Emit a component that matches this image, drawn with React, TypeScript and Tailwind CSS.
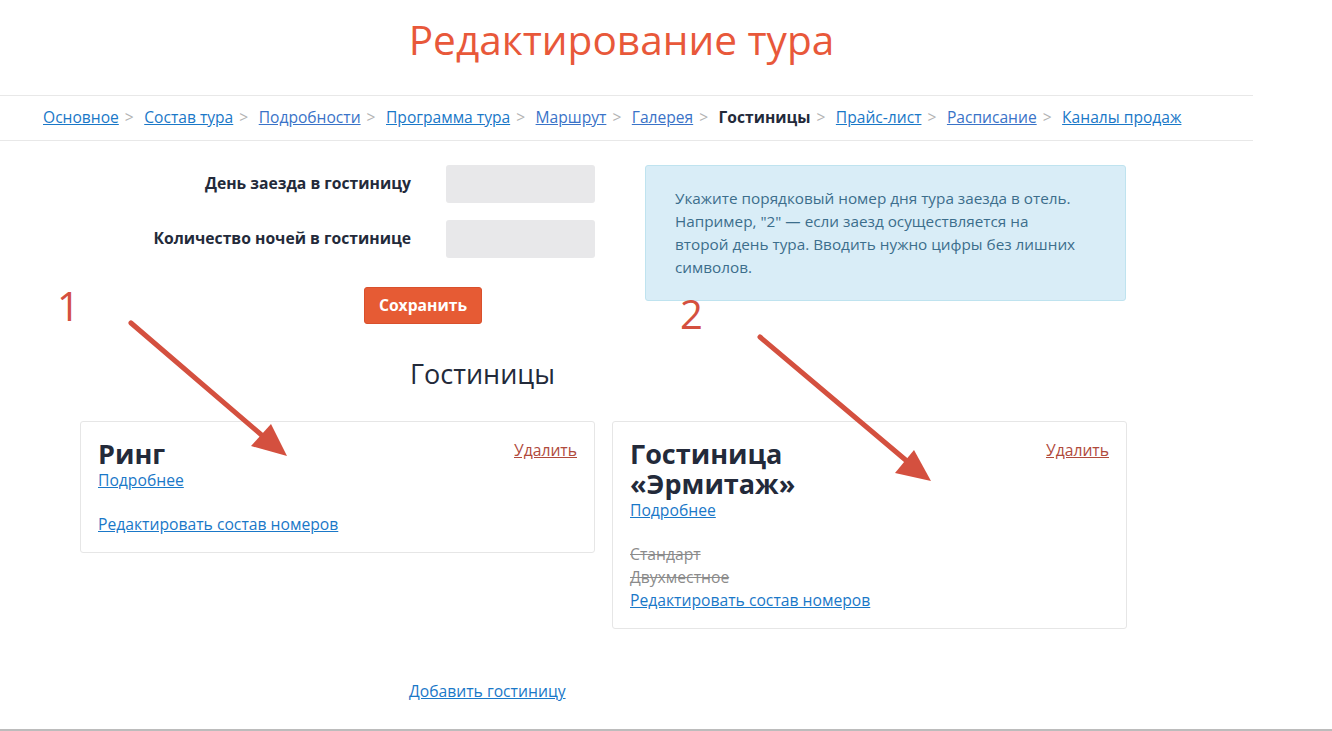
import React from "react";

const crumbs = [
  { label: "Основное", href: "#" },
  { label: "Состав тура", href: "#" },
  { label: "Подробности", href: "#", visited: true },
  { label: "Программа тура", href: "#" },
  { label: "Маршрут", href: "#", visited: true },
  { label: "Галерея", href: "#", visited: true },
  { label: "Гостиницы", current: true },
  { label: "Прайс-лист", href: "#" },
  { label: "Расписание", href: "#", visited: true },
  { label: "Каналы продаж", href: "#" },
];

interface Hotel {
  name: string;
  rooms: string[];
}

const hotels: Hotel[] = [
  { name: "Ринг", rooms: [] },
  { name: "Гостиница «Эрмитаж»", rooms: ["Стандарт", "Двухместное"] },
];

const HotelCard = ({ hotel }: { hotel: Hotel }) => (
  <div className="w-[515px] rounded-[3px] border border-[#e6e6e6] bg-white px-[17px] pt-[17px] pb-[17px]">
    <div className="flex items-start justify-between">
      <h3 className="max-w-[240px] text-[27px] font-bold leading-[30px] text-[#232a3a]">
        {hotel.name}
      </h3>
      <a href="#" className="text-[15.7px] leading-[22px] text-[#b04a3c] underline">
        Удалить
      </a>
    </div>
    <a href="#" className="block text-[15.7px] leading-[22px] text-[#1a78c8] underline">
      Подробнее
    </a>
    <div className="mt-[22px]">
      {hotel.rooms.map((room) => (
        <div key={room} className="text-[15.7px] leading-[23px] text-[#8b8b8b] line-through">
          {room}
        </div>
      ))}
      <a href="#" className="block text-[15.7px] leading-[22px] text-[#1a78c8] underline">
        Редактировать состав номеров
      </a>
    </div>
  </div>
);

export default function App() {
  return (
    <div className="relative min-h-[731px] w-full overflow-hidden bg-white font-['Open_Sans',sans-serif] text-[#232a3a]">
      <div className="w-[1253px]">
        <h1 className="pt-[16px] pr-[10px] text-center text-[40.6px] leading-[48px] font-normal text-[#e8583a]">
          Редактирование тура
        </h1>

        {/* breadcrumbs */}
        <nav className="mt-[31px] flex h-[46px] items-center border-y border-[#e8e8e8] px-[43px] text-[15.6px]">
          {crumbs.map((c, i) => (
            <React.Fragment key={c.label}>
              {c.current ? (
                <span className="font-bold text-[#232a3a]">{c.label}</span>
              ) : (
                <a
                  href={c.href}
                  className={c.visited ? "text-[#3a73c8] underline" : "text-[#1a78c8] underline"}
                >
                  {c.label}
                </a>
              )}
              {i < crumbs.length - 1 && (
                <span className="ml-[6px] mr-[10.5px] text-[#b3b3b3]">&gt;</span>
              )}
            </React.Fragment>
          ))}
        </nav>

        {/* form + hint */}
        <div className="flex pt-[24px]">
          <div className="w-[620px]">
            <div className="flex h-[38px] items-center">
              <label className="w-[411px] text-right text-[15.7px] font-bold">
                День заезда в гостиницу
              </label>
              <input className="ml-[35px] h-[38px] w-[149px] rounded-[3px] bg-[#e8e8ea] outline-none" />
            </div>
            <div className="mt-[17px] flex h-[38px] items-center">
              <label className="w-[411px] text-right text-[15.7px] font-bold">
                Количество ночей в гостинице
              </label>
              <input className="ml-[35px] h-[38px] w-[149px] rounded-[3px] bg-[#e8e8ea] outline-none" />
            </div>
            <button className="mt-[29px] ml-[364px] h-[37px] w-[118px] rounded-[3px] border border-[#d9502c] bg-[#e65b34] text-[15.7px] font-bold text-white">
              Сохранить
            </button>
          </div>
          <div className="ml-[25px] h-[136px] w-[481px] rounded-[3px] border border-[#bfe3ef] bg-[#d9edf7] pr-[35px] pl-[29px] pt-[21px] text-[15.3px] leading-[23px] text-[#3c6e8c]">
            Укажите порядковый номер дня тура заезда в отель. Например, "2" — если заезд
            осуществляется на
            <br />
            второй день тура. Вводить нужно цифры без лишних символов.
          </div>
        </div>

        <h2 className="mt-[32px] pl-[410px] text-[27px] leading-[36px] font-normal text-[#232a3a]">
          Гостиницы
        </h2>

        <div className="mt-[29px] flex items-start gap-[17px] pl-[80px]">
          {hotels.map((h) => (
            <HotelCard key={h.name} hotel={h} />
          ))}
        </div>

        <div className="mt-[51px] pl-[409px] text-[15.7px] leading-[22px]">
          <a href="#" className="text-[#1a78c8] underline">
            Добавить гостиницу
          </a>
        </div>
      </div>

      <div className="mt-[27px] h-[3px] w-full border-t-2 border-[#bcbcbc] bg-[#f0f0f0]" />

      {/* annotations */}
      <span className="absolute top-[282px] left-[57px] text-[40px] leading-[48px] text-[#d4503f]">1</span>
      <span className="absolute top-[290px] left-[680px] text-[40px] leading-[48px] text-[#d4503f]">2</span>
      <svg className="pointer-events-none absolute top-0 left-0" width="1332" height="731">
        <g stroke="#d4503f" strokeWidth="5" strokeLinecap="round" fill="#d4503f">
          <line x1="131" y1="323" x2="265" y2="438" />
          <line x1="760" y1="337" x2="908" y2="462" />
        </g>
        <g fill="#d4503f">
          <polygon points="287,456 251,446 271,424" />
          <polygon points="931,481 895,473 914,450" />
        </g>
      </svg>
    </div>
  );
}
